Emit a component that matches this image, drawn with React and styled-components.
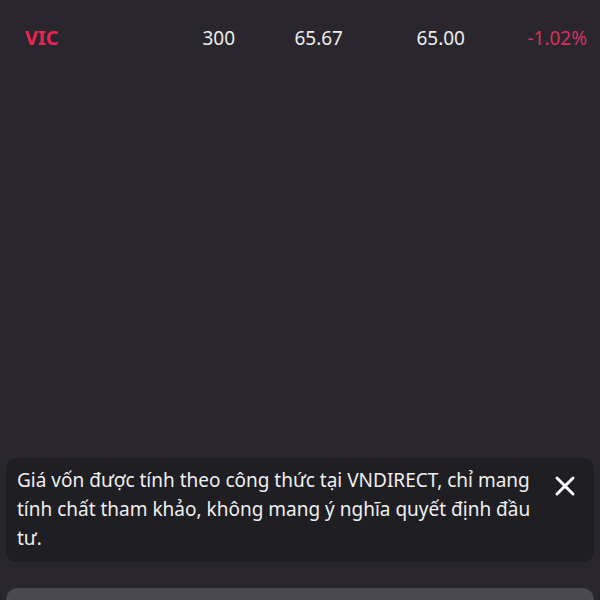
import React from "react";
import styled, { createGlobalStyle } from "styled-components";

const GlobalStyle = createGlobalStyle`
  html, body {
    margin: 0;
    padding: 0;
    background: #29272d;
  }
  * { box-sizing: border-box; }
`;

const Page = styled.div`
  width: 600px;
  height: 600px;
  display: flex;
  flex-direction: column;
  background: #29272d;
  font-family: "Noto Sans", sans-serif;
  overflow: hidden;
`;

const Row = styled.div`
  display: grid;
  grid-template-columns: 1fr 100px 108px 122px 122px;
  align-items: center;
  padding: 0 13px 0 25px;
  height: 75px;
`;

const Symbol = styled.div`
  color: #ea2551;
  font-weight: 700;
  font-size: 20px;
`;

const Cell = styled.div`
  text-align: right;
  font-size: 19px;
  color: ${(p) => p.color || "#ececec"};
`;

const Spacer = styled.div`
  flex: 1;
`;

const Toast = styled.div`
  margin: 0 6px;
  padding: 8px 16px 9px 11px;
  background: #1f1e23;
  border-radius: 10px;
  display: flex;
  align-items: flex-start;
  justify-content: space-between;
  gap: 16px;
`;

const Message = styled.p`
  margin: 0;
  color: #efefef;
  font-size: 19px;
  line-height: 29px;
  max-width: 515px;
`;

const Close = styled.button`
  background: none;
  border: none;
  padding: 0;
  margin-top: 7px;
  width: 26px;
  height: 26px;
  display: flex;
  align-items: center;
  justify-content: center;
  cursor: pointer;
  flex-shrink: 0;
`;

const BottomPanel = styled.div`
  margin: 26px 6px 0;
  height: 12px;
  background: #4a494f;
  border-radius: 16px 16px 0 0;
`;

export default function App() {
  return (
    <>
      <GlobalStyle />
      <Page>
        <Row>
          <Symbol>VIC</Symbol>
          <Cell>300</Cell>
          <Cell>65.67</Cell>
          <Cell>65.00</Cell>
          <Cell color="#d8305c">-1.02%</Cell>
        </Row>
        <Spacer />
        <Toast>
          <Message>
            Giá vốn được tính theo công thức tại VNDIRECT, chỉ mang tính chất
            tham khảo, không mang ý nghĩa quyết định đầu tư.
          </Message>
          <Close>
            <svg width="22" height="22" viewBox="0 0 22 22">
              <path
                d="M3 3 L19 19 M19 3 L3 19"
                stroke="#ffffff"
                strokeWidth="3"
                strokeLinecap="round"
              />
            </svg>
          </Close>
        </Toast>
        <BottomPanel />
      </Page>
    </>
  );
}
